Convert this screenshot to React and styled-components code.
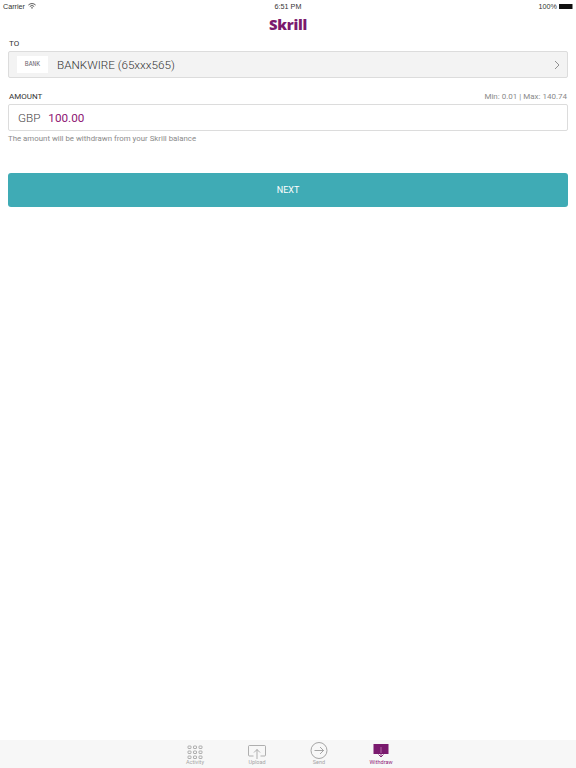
import React from 'react';
import styled, { createGlobalStyle } from 'styled-components';

const GlobalStyle = createGlobalStyle`
  html, body {
    margin: 0;
    padding: 0;
    background: #fff;
    font-family: Roboto, "Liberation Sans", sans-serif;
  }
`;

const Page = styled.div`
  display: flex;
  flex-direction: column;

  width: 576px;
  height: 768px;
  overflow: hidden;
`;

const StatusBar = styled.div`
  display: grid;
  grid-template-columns: 1fr auto 1fr;
  align-items: center;

  height: 12px;
  padding: 0 3px;

  font-family: "Liberation Sans", sans-serif;
  font-size: 7.2px;
  color: #333;
`;

const StatusLeft = styled.div`
  display: flex;
  align-items: center;
  gap: 3px;
`;

const StatusRight = styled.div`
  display: flex;
  align-items: center;
  justify-content: flex-end;
  gap: 2px;
`;

const Battery = styled.span`
  display: block;
  width: 13px;
  height: 5px;
  background: #111;
  border-right: 1px solid #888;
`;

const Header = styled.div`
  display: flex;
  justify-content: center;
  height: 25px;
`;

const Logo = styled.span`
  font-family: "Open Sans", sans-serif;
  font-size: 14.8px;
  font-weight: 800;
  line-height: 24px;
  letter-spacing: -0.3px;
  color: #7a1a6e;
`;

const Content = styled.main`
  flex: 1;
  padding: 0 8px;
`;

const LabelRow = styled.div`
  display: flex;
  justify-content: space-between;
  align-items: center;

  height: 13px;
  margin-bottom: 1px;
  padding: 0 1px;
`;

const Label = styled.span`
  font-size: 8px;
  color: #333;
`;

const Limits = styled.span`
  font-size: 8px;
  color: #8a8a8a;
`;

const Field = styled.div`
  display: flex;
  align-items: center;
  box-sizing: border-box;

  height: 27px;
  padding: 0 7px 0 8px;

  background: ${({ $muted }) => ($muted ? '#f3f3f3' : '#fff')};
  border: 1px solid #dcdcdc;
  border-radius: 2px;
`;

const BankBadge = styled.span`
  display: flex;
  align-items: center;
  justify-content: center;

  width: 31px;
  height: 17px;
  margin-right: 9px;

  background: #fff;
  font-family: "Liberation Mono", monospace;
  font-size: 6.4px;
  color: #6f6a72;
`;

const BankName = styled.span`
  flex: 1;
  font-size: 11.7px;
  font-weight: 300;
  color: #333;
`;

const Currency = styled.span`
  margin: 0 8px 0 1px;
  font-size: 11.7px;
  font-weight: 300;
  color: #444;
`;

const AmountValue = styled.span`
  font-size: 11.7px;
  color: #8e1573;
`;

const Helper = styled.p`
  margin: 3px 0 0;
  font-size: 7.85px;
  line-height: 10px;
  color: #8a8a8a;
`;

const NextButton = styled.button`
  display: block;
  width: 100%;
  height: 34px;
  margin-top: 29px;
  padding: 0;

  background: #3fabb5;
  border: none;
  border-radius: 3px;

  font-family: inherit;
  font-size: 9px;
  color: #fff;
`;

const AmountSection = styled.section`
  margin-top: 12px;
`;

const TabBar = styled.nav`
  display: flex;
  justify-content: center;
  gap: 22px;

  height: 28px;

  background: #f7f7f7;
`;

const Tab = styled.div`
  display: flex;
  flex-direction: column;
  align-items: center;
  justify-content: flex-end;

  width: 40px;
  padding-bottom: 2px;

  font-size: 5.5px;
  line-height: 7px;
  color: ${({ $active }) => ($active ? '#8f1a78' : '#a5a5a5')};
`;

const ActivityIcon = () => (
  <svg width="16" height="14" viewBox="0 0 16 14" fill="none" stroke="#8f8f8f" strokeWidth="0.7">
    {[1, 6, 11].map((y) =>
      [1, 6.5, 12].map((x) => <rect key={`${x}-${y}`} x={x} y={y} width="3" height="2.5" rx="0.5" />)
    )}
  </svg>
);

const UploadIcon = () => (
  <svg width="18" height="14" viewBox="0 0 18 14" fill="none" stroke="#8f8f8f" strokeWidth="0.7">
    <path d="M5.5 11H1.5a1 1 0 0 1-1-1V1.5a1 1 0 0 1 1-1h15a1 1 0 0 1 1 1V10a1 1 0 0 1-1 1h-4" />
    <path d="M9 14V4.5M6 7.5l3-3 3 3" />
  </svg>
);

const SendIcon = () => (
  <svg width="18" height="17" viewBox="0 0 18 17" fill="none" stroke="#8f8f8f" strokeWidth="0.8">
    <circle cx="9" cy="8.5" r="8" />
    <path d="M4.5 8.5h9M10 5l3.5 3.5L10 12" />
  </svg>
);

const WithdrawIcon = () => (
  <svg width="16" height="15" viewBox="0 0 16 15" fill="none">
    <rect x="0.5" y="0" width="15" height="10" fill="#7a1a6e" />
    <path d="M8 3v10M5.5 10.5L8 13l2.5-2.5" stroke="#7a1a6e" strokeWidth="0.9" />
    <path d="M8 3v6" stroke="#c48bbd" strokeWidth="0.7" />
  </svg>
);

const WifiIcon = () => (
  <svg width="8" height="6" viewBox="0 0 8 6" fill="none" stroke="#333" strokeWidth="0.8">
    <path d="M0.4 2a5.2 5.2 0 0 1 7.2 0M1.8 3.5a3.2 3.2 0 0 1 4.4 0" />
    <path d="M3 4.8a1.4 1.4 0 0 1 2 0L4 5.8z" fill="#333" stroke="none" />
  </svg>
);

const Chevron = () => (
  <svg width="6" height="10" viewBox="0 0 6 10" fill="none" stroke="#777" strokeWidth="0.8">
    <path d="M1 1l4 4-4 4" />
  </svg>
);

export default function App() {
  return (
    <Page>
      <GlobalStyle />
      <StatusBar>
        <StatusLeft>
          Carrier
          <WifiIcon />
        </StatusLeft>
        <span>6:51 PM</span>
        <StatusRight>
          100%
          <Battery />
        </StatusRight>
      </StatusBar>
      <Header>
        <Logo>Skrill</Logo>
      </Header>
      <Content>
        <LabelRow>
          <Label>TO</Label>
        </LabelRow>
        <Field $muted>
          <BankBadge>BANK</BankBadge>
          <BankName>BANKWIRE (65xxx565)</BankName>
          <Chevron />
        </Field>
        <AmountSection>
          <LabelRow>
            <Label>AMOUNT</Label>
            <Limits>Min: 0.01 | Max: 140.74</Limits>
          </LabelRow>
          <Field>
            <Currency>GBP</Currency>
            <AmountValue>100.00</AmountValue>
          </Field>
          <Helper>The amount will be withdrawn from your Skrill balance</Helper>
        </AmountSection>
        <NextButton>NEXT</NextButton>
      </Content>
      <TabBar>
        <Tab>
          <ActivityIcon />
          Activity
        </Tab>
        <Tab>
          <UploadIcon />
          Upload
        </Tab>
        <Tab>
          <SendIcon />
          Send
        </Tab>
        <Tab $active>
          <WithdrawIcon />
          Withdraw
        </Tab>
      </TabBar>
    </Page>
  );
}
